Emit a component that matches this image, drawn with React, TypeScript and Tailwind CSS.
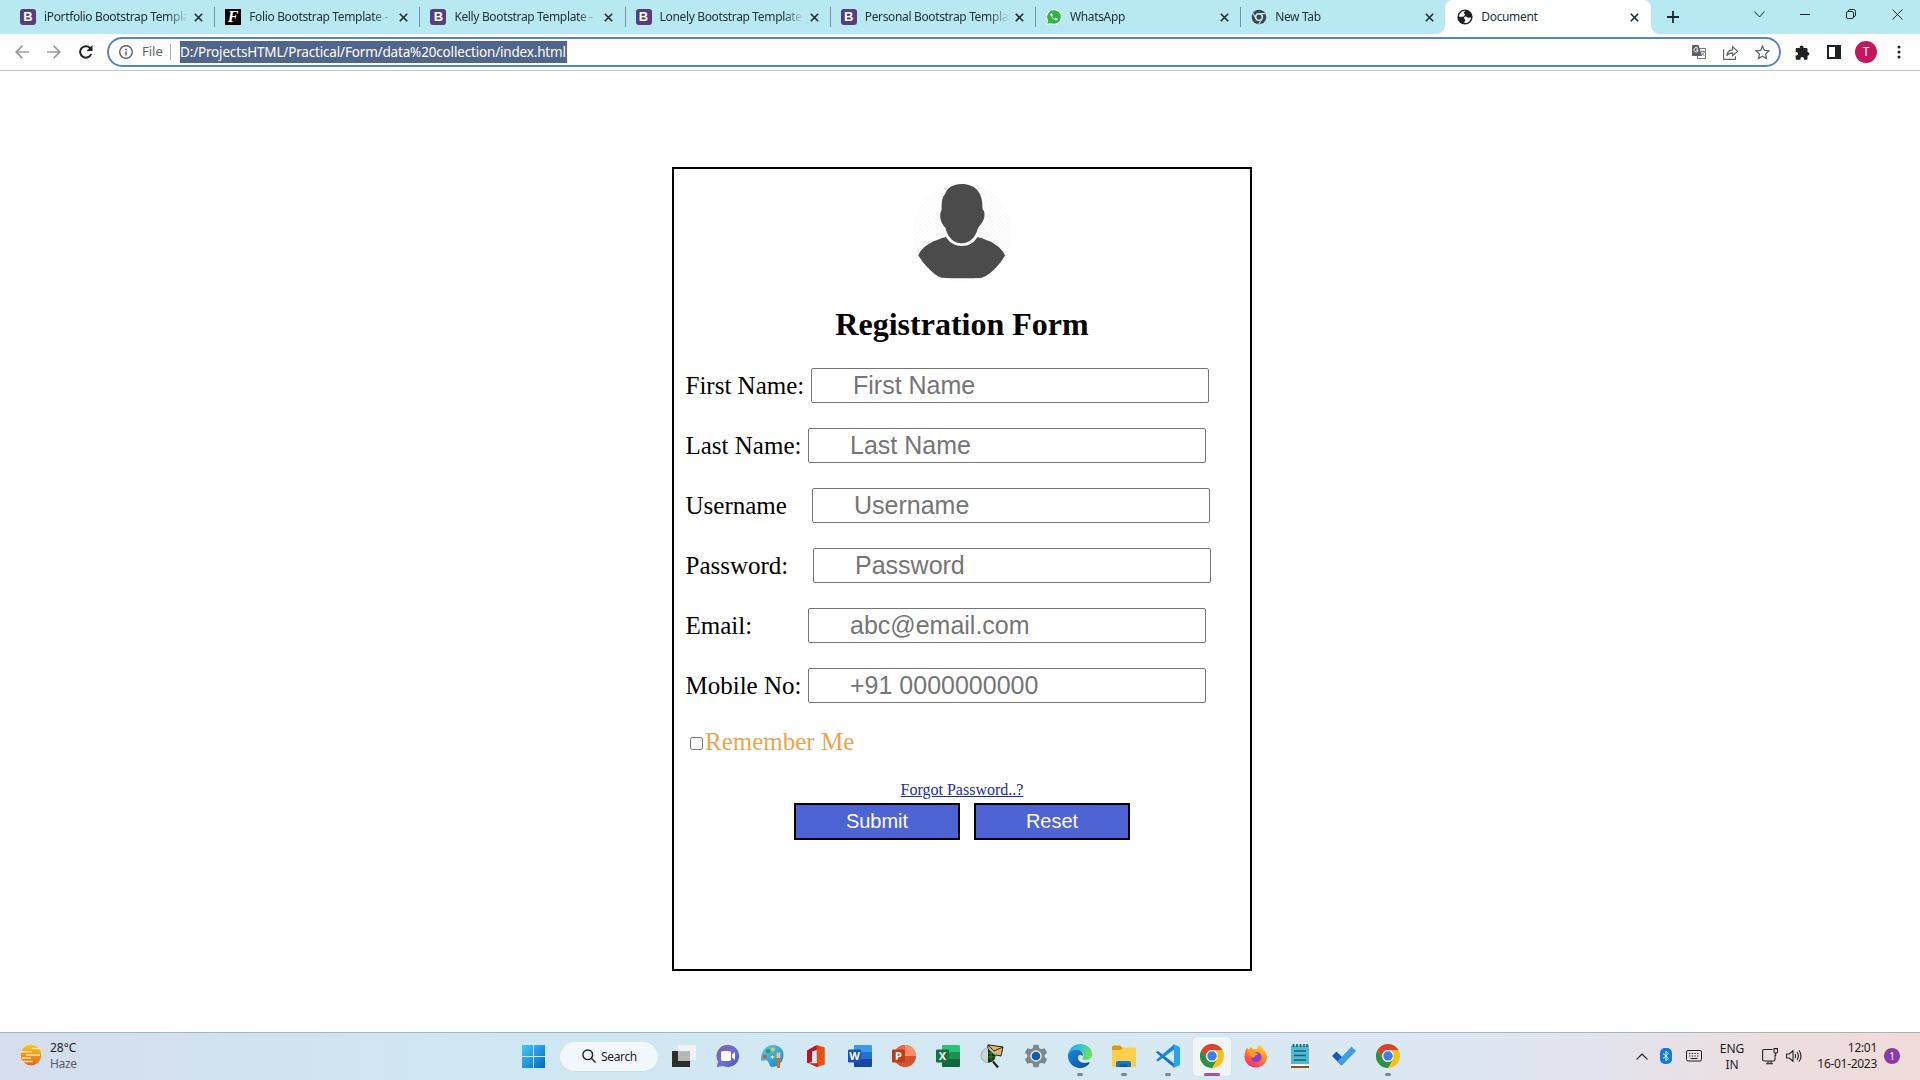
import React from "react";

const UI = "font-['Noto_Sans',sans-serif]";

/* ---------- Tab favicons ---------- */
function BootstrapIcon() {
  return (
    <div className="flex size-4 items-center justify-center rounded-[3px] bg-[#563d7c] font-['Liberation_Sans',sans-serif] text-[13px] leading-4 font-bold text-white">
      B
    </div>
  );
}
function FolioIcon() {
  return (
    <div className="flex size-4 items-center justify-center bg-black font-['Liberation_Serif',serif] text-[16px] leading-4 font-bold text-white italic">
      F
    </div>
  );
}
function WhatsAppIcon() {
  return (
    <svg className="size-4" viewBox="0 0 16 16">
      <path d="M0 16l1.2-4.1A8 8 0 1 1 4.3 15z" fill="#f4fbf7" />
      <path d="M1.3 14.7l.9-3.2A6.8 6.8 0 1 1 4.700 13.900z" fill="#2cb742" />
      <path d="M5.300 4c-.8.5-1.100 1.500-.6 2.700.9 2.200 2.700 3.800 4.800 4.500 1.100.3 2-.2 2.200-1.200.1-.4-1.700-1.300-2-1.200-.4.1-.7 1-1.100.9-1.100-.4-2-1.200-2.500-2.300-.1-.3.700-.8.6-1.200C6.600 5.800 6 4 5.300 4z" fill="#fff" />
    </svg>
  );
}
function GreyChromeIcon() {
  return (
    <svg className="size-4" viewBox="0 0 16 16" fill="none">
      <circle cx="8" cy="8" r="7.300" fill="#3b4a50" />
      <circle cx="8" cy="8" r="3.300" stroke="#d3f0f5" strokeWidth="1.500" />
      <path d="M8 4.700h6.600M5.100 9.700L1.800 4.300M10.900 9.700L7.800 15.200" stroke="#c4ebf3" strokeWidth="1.200" />
    </svg>
  );
}
function GlobeIcon() {
  return (
    <svg className="size-4" viewBox="0 0 16 16">
      <circle cx="8" cy="8" r="7.600" fill="#202124" />
      <path d="M8.500 1.800c-.3 1-1.700 1-1.900 2-.1.900 1.300.8 1.400 1.700.1 1-1.500 1.200-1.500 2.300H2C2 4.500 5 1.500 8.500 1.800zM8.500 7.600c1.200-.2 1.500 1 2.700 1.100 1 .1 1.700-.5 2.900-.2-.2 2.700-2.300 5.200-5.200 5.600-1.300.1-1.700-.3-1.500-1.300.2-.8 1-.8.900-1.700C8.200 10 6.900 10 7 8.800c.1-.7.700-1.100 1.500-1.200z" fill="#fff" />
    </svg>
  );
}
function Cross() {
  return (
    <svg className="size-[9px] shrink-0" viewBox="0 0 9 9" stroke="#1f2d33" strokeWidth="1.600">
      <path d="M.8.800l7.400 7.400M8.200.800L.8 8.200" />
    </svg>
  );
}

const tabs = [
  { title: "iPortfolio Bootstrap Templa", icon: <BootstrapIcon /> },
  { title: "Folio Bootstrap Template -", icon: <FolioIcon /> },
  { title: "Kelly Bootstrap Template -", icon: <BootstrapIcon /> },
  { title: "Lonely Bootstrap Template", icon: <BootstrapIcon /> },
  { title: "Personal Bootstrap Templa", icon: <BootstrapIcon /> },
  { title: "WhatsApp", icon: <WhatsAppIcon /> },
  { title: "New Tab", icon: <GreyChromeIcon /> },
];

function TabStrip() {
  return (
    <div className="flex h-[34px] bg-[#b8e8f1] pl-2.5 text-[12px] text-[#20343b]">
      {tabs.map((t, i) => (
        <div key={t.title} className="flex w-[205.200px] shrink-0 items-center pl-2.5">
          <div className="shrink-0">{t.icon}</div>
          <div className="ml-2 w-[144px] shrink-0 [mask-image:linear-gradient(to_right,#000_86%,transparent_100%)] tracking-[-0.35px] whitespace-nowrap">
            {t.title}
          </div>
          <div className="ml-[6px] flex grow items-center">
            <Cross />
          </div>
          {i < 6 && <div className="h-5 w-px bg-[#70969f]" />}
        </div>
      ))}
      <div className="relative -ml-px flex w-[206px] shrink-0 items-center rounded-t-lg bg-white pl-3">
        <div className="absolute bottom-0 -left-2 size-2 bg-[radial-gradient(circle_at_0_0,transparent_7.500px,#fff_8px)]" />
        <div className="absolute -right-2 bottom-0 size-2 bg-[radial-gradient(circle_at_100%_0,transparent_7.500px,#fff_8px)]" />
        <GlobeIcon />
        <span className="ml-2 w-[149px] tracking-[-0.35px]">Document</span>
        <Cross />
      </div>
      <svg className="mt-[11px] ml-[16px] size-3" viewBox="0 0 12 12" stroke="#1b2a30" strokeWidth="1.800">
        <path d="M6 0v12M0 6h12" />
      </svg>
      <div className="mr-[17px] ml-auto flex items-center gap-[36px] pb-[6px]">
        <svg className="mr-[-1px] h-[7px] w-[11px]" viewBox="0 0 11 7" fill="none" stroke="#1b2a30">
          <path d="M.5.500l5 5.500 5-5.500" />
        </svg>
        <svg className="h-2.5 w-[10px]" viewBox="0 0 10 10" stroke="#1b2a30">
          <path d="M0 5.500h10" />
        </svg>
        <svg className="size-[10px]" viewBox="0 0 10 10" fill="none" stroke="#1b2a30">
          <rect x=".5" y="2.500" width="7" height="7" rx="1.500" />
          <path d="M2.500 2.500v-.5Q2.500.500 4 .5h3.500q2 0 2 2V6q0 1.500-1.500 1.500" />
        </svg>
        <svg className="size-[11px]" viewBox="0 0 11 11" stroke="#1b2a30">
          <path d="M.5.500l10 10M10.500.500l-10 10" />
        </svg>
      </div>
    </div>
  );
}

function Toolbar() {
  return (
    <div className="flex h-[37px] items-center border-b border-[#c9c9c9] bg-white">
      <svg className="ml-[15px] h-[14px] w-[14px]" viewBox="0 0 14 14" fill="none" stroke="#9a9a9a" strokeWidth="1.700">
        <path d="M14 7H1.300M7.300.800L1.200 7l6.100 6.200" />
      </svg>
      <svg className="ml-[18px] h-[14px] w-[14px]" viewBox="0 0 14 14" fill="none" stroke="#9a9a9a" strokeWidth="1.700">
        <path d="M0 7h12.700M6.700.800L12.800 7l-6.100 6.200" />
      </svg>
      <svg className="ml-[18px] h-[14px] w-[14px]" viewBox="0 0 14 14" fill="none" stroke="#202124" strokeWidth="2">
        <path d="M12.200 9A5.700 5.700 0 1 1 11 3l1.500 1.500" />
        <path d="M13.500 0v6H7.500z" fill="#202124" stroke="none" />
      </svg>
      <div className="ml-[14px] flex h-[30px] w-[1674px] items-center rounded-full border-2 border-[#5484d0] text-[13px]">
        <svg className="ml-[10px] size-[14px]" viewBox="0 0 14 14" fill="none" stroke="#5f6368" strokeWidth="1.400">
          <circle cx="7" cy="7" r="6.300" />
          <path d="M7 6.200v4.300M7 3.400v1.500" />
        </svg>
        <span className="ml-[9px] w-[22px] text-[#5f6368]">File</span>
        <div className="ml-[6px] h-4 w-px bg-[#a8a8a8]" />
        <span className="ml-[9px] h-[22px] w-[387px] bg-[#51658a] text-[13.500px] leading-[22px] tracking-[-0.17px] whitespace-nowrap text-white">
          D:/ProjectsHTML/Practical/Form/data%20collection/index.html
        </span>
        <div className="mr-[9px] ml-auto flex items-center gap-[17px] text-[#5f6368]">
          <svg className="size-[14px]" viewBox="0 0 14 14" fill="none">
            <rect x="5.500" y="3.500" width="8" height="10" stroke="#777b80" />
            <path d="M0 0h6.500l3.500 11H0z" fill="#5f6368" />
            <path d="M6 4H4.300M5.900 3.400A2.200 2.200 0 1 0 6.200 5.600H4.300" stroke="#fff" strokeWidth=".9" />
            <path d="M8.500 6.500h4.500M11 5.500v1M12.300 6.500c-.4 2-1.500 3-3 4M9 7.500l3.500 3.500" stroke="#5f6368" strokeWidth=".8" />
          </svg>
          <svg className="size-[15px]" viewBox="0 0 14 14" fill="none" stroke="#5f6368" strokeWidth="1.100">
            <path d="M.6 4v9.400h11V10.500M3.500 10c.3-3.500 2.200-5.300 5.500-5.500V1.500l4.500 4.400L9 10V7.300C6.500 7.300 4.700 8 3.500 10z" />
          </svg>
          <svg className="size-[15px]" viewBox="0 0 15 15" fill="none" stroke="#5f6368" strokeWidth="1.300">
            <path d="M7.500 1.200l1.900 4.200 4.600.5-3.400 3.100.9 4.600-4-2.300-4 2.300.9-4.600L1 5.900l4.600-.5z" />
          </svg>
        </div>
      </div>
      <svg className="ml-[14px] size-[15px]" viewBox="0 0 15 15" fill="#202124">
        <path d="M4.700 2.300a1.900 1.900 0 0 1 3.800 0V3h3q1 0 1 1v3h.4a1.900 1.900 0 0 1 0 3.700h-.4v3q0 1-1 1H9v-.8a1.800 1.800 0 0 0-3.600 0v.8H1.700q-1 0-1-1v-3.200h.6a1.800 1.800 0 0 0 0-3.600H.7V4q0-1 1-1h3z" />
      </svg>
      <div className="ml-[17px] h-[14px] w-[14px] border-2 border-r-[6px] border-[#202124]" />
      <div className="ml-[14px] flex size-[22px] items-center justify-center rounded-full bg-[#c2185b] text-[12px] text-white">T</div>
      <svg className="ml-[20px] h-[14px] w-1" viewBox="0 0 4 14" fill="#202124">
        <circle cx="2" cy="2" r="1.500" />
        <circle cx="2" cy="7" r="1.500" />
        <circle cx="2" cy="12" r="1.500" />
      </svg>
    </div>
  );
}

/* ---------- Registration form ---------- */
const fields = [
  { label: "First Name:", hint: "First Name", width: "w-[125.500px]" },
  { label: "Last Name:", hint: "Last Name", width: "w-[122.500px]" },
  { label: "Username", hint: "Username", width: "w-[126.500px]" },
  { label: "Password:", hint: "Password", width: "w-[127.500px]" },
  { label: "Email:", hint: "abc@email.com", width: "w-[122.500px]" },
  { label: "Mobile No:", hint: "+91 0000000000", width: "w-[122.500px]" },
];

function Avatar() {
  return (
    <svg className="mx-auto h-[100px] w-[100px]" viewBox="0 0 100 100">
      <defs>
        <pattern id="hatch" width="3" height="3" patternUnits="userSpaceOnUse" patternTransform="rotate(45)">
          <rect width="3" height="3" fill="#fefefe" />
          <rect width="1" height="3" fill="#f8f8f8" />
        </pattern>
      </defs>
      <circle cx="50" cy="50" r="49.500" fill="url(#hatch)" />
      <path
        d="M34 55C22 58.500 10.500 63 6.300 73.500C13 84 22 92.500 28 95.300Q30 96.200 50 96.300T71 95.300C78 92.500 87 84 93 73.500C88.500 63 77.500 58.500 65.500 55c-3.500 6-9 9-15.500 9s-12.500-3-16-9z"
        fill="#4b4b4b"
      />
      <path
        d="M49.500 61.300c8 0 14-5.500 16.500-15.300 3.500-4.500 6.500-8 6.500-13 0-3-.5-4.500-2-6C71 11 64 2 49.500 2c-8 0-14.500 3.500-16.300 10-3.200 3.500-3.700 8-3.500 15.500-3 5.500-1.500 13 3.800 18.500C36 55.500 41.500 61.300 49.500 61.300z"
        fill="#4b4b4b"
      />
    </svg>
  );
}

function RegistrationForm() {
  return (
    <div className="mx-auto mt-24 h-[804px] w-[580px] border-2 border-black bg-white px-[11px] pt-[13px] font-['Liberation_Serif',serif] text-black">
      <Avatar />
      <h2 className="mt-[24px] text-center text-[32px] leading-[37px] font-bold">Registration Form</h2>
      <div className="mt-[25px] flex flex-col gap-[25px] pl-[0.500px]">
        {fields.map((f) => (
          <div key={f.label} className="flex h-[35px] items-center">
            <label className={`shrink-0 text-[25px] leading-[35px] ${f.width}`}>{f.label}</label>
            <input
              className="h-[35px] w-[398px] rounded-[2px] border border-[#767676] bg-white py-0 pr-0 pl-[41px] font-['Liberation_Sans',sans-serif] text-[25px] leading-[33px] placeholder:text-[#757575]"
              placeholder={f.hint}
            />
          </div>
        ))}
      </div>
      <div className="mt-[24px] flex h-[29px] items-center text-[25px] text-[#eea34d]">
        <div className="mt-[3px] mr-[2px] ml-[5px] size-[13px] rounded-[2.500px] border border-[#767676]" />
        Remember Me
      </div>
      <div className="mt-[25px] text-center text-[16px] leading-[18px] text-[#1a2f9e] underline">Forgot Password..?</div>
      <div className="mt-1 flex justify-center gap-[14px] font-['Liberation_Sans',sans-serif] text-[20px] text-white">
        <button className="h-[37px] w-[166px] border-2 border-black bg-[#4e64d4] leading-[33px]">Submit</button>
        <button className="h-[37px] w-[156px] border-2 border-black bg-[#4e64d4] leading-[33px]">Reset</button>
      </div>
    </div>
  );
}

/* ---------- Taskbar icons ---------- */
function WindowsLogo() {
  return (
    <svg className="size-[23px]" viewBox="0 0 23 23">
      <defs>
        <linearGradient id="win" x1="0" y1="0" x2="1" y2="1">
          <stop offset="0" stopColor="#45c8fa" />
          <stop offset="1" stopColor="#0268c8" />
        </linearGradient>
      </defs>
      <path d="M0 0h11v11H0zM12 0h11v11H12zM0 12h11v11H0zM12 12h11v11H12z" fill="url(#win)" />
    </svg>
  );
}
function TaskView() {
  return (
    <svg className="size-6" viewBox="0 0 24 24">
      <path d="M6 1h18v15H6z" fill="#f0f2f4" />
      <path d="M0 7h18v16H0z" fill="#2e2e2e" />
      <path d="M6 7h12v10H6z" fill="#b5b7b8" />
    </svg>
  );
}
function TeamsChat() {
  return (
    <svg className="size-6" viewBox="0 0 24 24">
      <defs>
        <linearGradient id="chat" x1="0" y1="0" x2="1" y2="1">
          <stop offset="0" stopColor="#7f5fa8" />
          <stop offset=".5" stopColor="#6f70d0" />
          <stop offset="1" stopColor="#5550bd" />
        </linearGradient>
      </defs>
      <path d="M12 1a11 11 0 1 1-4.500 21L.8 23l1.200-5.500A11 11 0 0 1 12 1z" fill="url(#chat)" />
      <rect x="5" y="7" width="10" height="10" rx="2" fill="#fff" />
      <path d="M16 10.500L19 8v8l-3-2.500z" fill="#fff" />
    </svg>
  );
}
function Paint() {
  return (
    <svg className="size-6" viewBox="0 0 24 24">
      <defs>
        <linearGradient id="palette" x1="0" y1="0" x2="1" y2="1">
          <stop offset="0" stopColor="#5bd0ee" />
          <stop offset="1" stopColor="#1580cf" />
        </linearGradient>
      </defs>
      <path d="M13 1c6 0 10.500 4 10.500 9.500C23.500 18 18 23 12 23c-3 0-2.500-5-5-6.500S1 19 1 15C1 7 6 1 13 1z" fill="url(#palette)" />
      <circle cx="8" cy="7" r="2.200" fill="#3a9b45" />
      <circle cx="13" cy="5.500" r="2" fill="#f7c32e" />
      <circle cx="4.800" cy="12.500" r="2" fill="#d65532" />
      <path d="M12.500 11v4M10.500 13h4" stroke="#fff" />
      <path d="M16.500 14h4l-.5 10h-3z" fill="#b57a3a" />
      <path d="M16.500 8.500h4V14h-4z" fill="#e3c58d" />
    </svg>
  );
}
function Office() {
  return (
    <svg className="size-6" viewBox="0 0 24 24">
      <path d="M3 6.500L12.500 1 14 5.500 8 7.500v10L4 19.500l-1-1z" fill="#b0182c" />
      <path d="M12.500 1l8 2.500v17L13 23z" fill="#e24a12" />
      <path d="M12.500 1L15 5v17l-2.500 1-8-3.700H14V5z" fill="#c9251c" />
      <path d="M14 5l6.500-1.500v17L14 22z" fill="#e8500f" />
    </svg>
  );
}
type TileProps = { letter: string; top: string; mid: string; low: string; badge: string; round?: boolean };
function OfficeTile({ letter, top, mid, low, badge, round }: TileProps) {
  return (
    <div className="relative size-6">
      <svg className="absolute inset-0 size-6" viewBox="0 0 24 24">
        {round ? (
          <>
            <circle cx="13" cy="12" r="11" fill={low} />
            <path d="M2 12A11 11 0 0 1 13 1v11z" fill={mid} />
            <path d="M13 1a11 11 0 0 1 11 11H13z" fill={top} />
          </>
        ) : (
          <>
            <path d="M6 2q0-1 1-1h16q1 0 1 1v6H6z" fill={top} />
            <path d="M6 8h18v7H6z" fill={mid} />
            <path d="M6 15h18v7q0 1-1 1H7q-1 0-1-1z" fill={low} />
          </>
        )}
        <rect x="0" y="5.500" width="13" height="13" rx="1.200" fill={badge} />
      </svg>
      <span className="absolute top-[5px] left-0 w-[13px] text-center text-[11px] leading-[14px] font-bold text-white">{letter}</span>
    </div>
  );
}
function MailSearch() {
  return (
    <svg className="size-6" viewBox="0 0 24 24">
      <path d="M8 .800l15 2.200-2 9-5-1-5 4-4-6z" fill="#e2b660" stroke="#222" />
      <path d="M8 1l6 6 9-4" fill="none" stroke="#222" />
      <circle cx="8" cy="11.500" r="7" fill="#cbd5d4" stroke="#a8a8a0" strokeWidth="1" />
      <path d="M8 4.500v14c5 0 7.500-3 7.500-7z" fill="#10340f" />
      <path d="M8 9h5M8 13h7M11 7v10" stroke="#2fa22f" strokeWidth=".8" />
      <path d="M13 17.500l5 6" stroke="#222" strokeWidth="2.200" />
    </svg>
  );
}
function Gear() {
  return (
    <svg className="size-6" viewBox="0 0 24 24">
      <path d="M9.500.800h5l.8 3.400 2 1.100 3.300-1 2.500 4.300-2.400 2.400v2l2.400 2.400-2.500 4.300-3.300-1-2 1.100-.8 3.400h-5l-.8-3.400-2-1.100-3.300 1L.9 15.400 3.300 13v-2L.9 8.600l2.500-4.300 3.300 1 2-1.100z" fill="#7d858d" />
      <circle cx="12" cy="12" r="5.800" fill="#e4ebf0" />
      <circle cx="12" cy="12" r="4.300" fill="#0f5cab" />
    </svg>
  );
}
function Edge() {
  return (
    <svg className="size-6" viewBox="0 0 24 24">
      <defs>
        <linearGradient id="edgeTop" x1="0" y1="0" x2="1" y2=".3">
          <stop offset="0" stopColor="#2ba6e4" />
          <stop offset=".5" stopColor="#35c1d6" />
          <stop offset="1" stopColor="#6be060" />
        </linearGradient>
        <linearGradient id="edgeLow" x1="0" y1="0" x2="1" y2="1">
          <stop offset="0" stopColor="#1b87d4" />
          <stop offset="1" stopColor="#0e4d9b" />
        </linearGradient>
      </defs>
      <path d="M0 12C0 8 4 5 9.500 5.500 13 6 15.500 9 15 12c-2-2-4.500-1.500-5 1-.5 4 4 7 9.500 5.500 1.500-.4 2.500-.2 2 .7C19.500 22 16 24 12 24 5.500 24 0 18.500 0 12z" fill="url(#edgeLow)" />
      <path d="M.2 10.500C1 4.500 6 0 12 0c7 0 12 4.500 12 10 0 4-3 6-6.500 6-2.500 0-3.500-1-3-2 2.500-3 .5-7.500-4.500-8.200C5.500 5.300 2 7.500.2 10.500z" fill="url(#edgeTop)" />
    </svg>
  );
}
function Folder() {
  return (
    <svg className="size-6" viewBox="0 0 24 24">
      <path d="M0 3q0-1.500 1.500-1.500H8L11 4h12v6H0z" fill="#d79b14" />
      <path d="M0 6h9l2-2.500h11.500Q24 3.500 24 5v17q0 1-1 1H1q-1 0-1-1z" fill="#fbcf4b" />
      <path d="M4 23v-4q0-2 2-2h11q2 0 2 2v4z" fill="#1675c4" />
      <path d="M7.500 20.500h8v2.500h-8z" fill="#0e5a9c" />
    </svg>
  );
}
function VsCode() {
  return (
    <svg className="size-6" viewBox="0 0 24 24">
      <path d="M0 8.500L2 7l16 12.500V23.500z" fill="#1174c0" />
      <path d="M0 16l2 1.500L18 5.500V.5z" fill="#1787d8" />
      <path d="M17 0l6 2.500q1 .5 1 1.500v16q0 1-1 1.500L17 24l1-4V4z" fill="#2ba3ee" />
    </svg>
  );
}
function Chrome() {
  return (
    <svg className="size-6" viewBox="0 0 24 24">
      <circle cx="12" cy="12" r="12" fill="#fbc116" />
      <path d="M1.600 6A12 12 0 0 1 22.400 6H12a6 6 0 0 0-5.200 9z" fill="#dc4132" />
      <path d="M1.600 6A12 12 0 0 0 12 24l5.200-9a6 6 0 0 1-10.400 0z" fill="#27934a" />
      <circle cx="12" cy="12" r="6" fill="#fff" />
      <circle cx="12" cy="12" r="4.700" fill="#3b7ded" />
    </svg>
  );
}
function Firefox() {
  return (
    <svg className="size-6" viewBox="0 0 24 24">
      <defs>
        <linearGradient id="fox" x1=".8" y1="0" x2=".3" y2="1">
          <stop offset="0" stopColor="#ffe23c" />
          <stop offset=".45" stopColor="#ff8b22" />
          <stop offset="1" stopColor="#f5277a" />
        </linearGradient>
      </defs>
      <path d="M3 3.500l2 2.500 2-3.500 2 3c1.500-.5 3-.3 4 0C13 3 14.500 1 16 .5c.5 3 6.500 5.500 7 11.500.5 6.500-5 11.500-11 11.500S.5 19 .5 12.500C.5 9 1.500 6 3 3.500z" fill="url(#fox)" />
      <path d="M11.500 8c4 0 6.500 2.500 6 5.500S14.500 18 12 18c-3 0-5-2-5-4.500 1.500 1 3 .5 3.500-.5L7 9.500z" fill="#8a3fd0" />
      <path d="M5 7c3-1 5 0 6.500 1.500L14 10c-1 1.500-3 .5-3.500 3C8 14 5 12 5 7z" fill="#ff9a1f" />
    </svg>
  );
}
function Notepad() {
  return (
    <svg className="size-6" viewBox="0 0 24 24">
      <path d="M3 20h18v2.500H3z" fill="#fff" />
      <path d="M3 22h18v2H3z" fill="#8e5320" />
      <path d="M3 1.500h18V20H3z" fill="#4fbbd3" />
      <path d="M5.500 0v3M9 0v3M12.500 0v3M16 0v3M19 0v3" stroke="#1e4f66" strokeWidth="1.500" />
      <path d="M6 7h12M6 11.500h12M6 16h12" stroke="#14607a" strokeWidth="1.500" />
    </svg>
  );
}
function Todo() {
  return (
    <svg className="size-6" viewBox="0 0 24 24">
      <path d="M0 12L4.500 7.500l9.500 9.500L9.500 21.500z" fill="#1b57b8" />
      <path d="M5.500 17.500L19.500 2.500 24 7 9.500 21.500z" fill="#3f9de8" />
    </svg>
  );
}

const apps: { icon: React.ReactNode; state?: "running" | "active" }[] = [
  { icon: <TaskView /> },
  { icon: <TeamsChat /> },
  { icon: <Paint /> },
  { icon: <Office /> },
  { icon: <OfficeTile letter="W" top="#3d9bea" mid="#2470d4" low="#1546a5" badge="#1a52b5" /> },
  { icon: <OfficeTile letter="P" top="#ff8f6b" mid="#e9694a" low="#d35230" badge="#c13b1b" round /> },
  { icon: <OfficeTile letter="X" top="#2fbf78" mid="#1b9155" low="#12683a" badge="#107540" /> },
  { icon: <MailSearch /> },
  { icon: <Gear /> },
  { icon: <Edge />, state: "running" },
  { icon: <Folder />, state: "running" },
  { icon: <VsCode />, state: "running" },
  { icon: <Chrome />, state: "active" },
  { icon: <Firefox /> },
  { icon: <Notepad /> },
  { icon: <Todo /> },
  { icon: <Chrome />, state: "running" },
];

function HazeSun() {
  return (
    <svg className="h-[22px] w-6" viewBox="0 0 24 22">
      <defs>
        <linearGradient id="sun" x1="0" y1="0" x2="0" y2="1">
          <stop offset="0" stopColor="#fbc717" />
          <stop offset="1" stopColor="#e0661b" />
        </linearGradient>
      </defs>
      <circle cx="12" cy="11" r="10.300" fill="url(#sun)" />
      <path d="M13 4.500h11M2 7.800h11M7 11h14M3 14h9M0 17.500h14" stroke="#f9e3a8" strokeWidth="1.500" />
    </svg>
  );
}

function Tray() {
  return (
    <div className="ml-auto flex h-full shrink-0 items-center text-[12px] leading-4 text-[#1d1d1f]">
      <svg className="h-[7px] w-3" viewBox="0 0 12 7" fill="none" stroke="#222" strokeWidth="1.200">
        <path d="M.5 6.500L6 1l5.500 5.500" />
      </svg>
      <div className="-mt-px ml-3 flex h-4 w-3 items-center justify-center rounded-[5px] bg-[#0a7cdf]">
        <svg className="h-3 w-2" viewBox="0 0 8 12" fill="none" stroke="#fff">
          <path d="M1 3.500l5.500 5L4 11V1l2.500 2.500-5.500 5" />
        </svg>
      </div>
      <svg className="-mt-px ml-[14px] h-3 w-4" viewBox="0 0 16 12" fill="none" stroke="#222">
        <rect x=".5" y=".5" width="15" height="10.500" rx="1.500" />
        <path d="M3 3.500h10M3 6h10" strokeDasharray="1.300 1.400" />
        <path d="M4.500 8.500h7" />
      </svg>
      <div className="ml-4 w-7 text-center">
        <div>ENG</div>
        <div>IN</div>
      </div>
      <svg className="-mt-px ml-4 h-[17px] w-4" viewBox="0 0 16 17" fill="none" stroke="#222" strokeWidth="1.100">
        <path d="M10.500 1.500H2Q.6 1.500.6 3v8.500Q.6 13 2 13h9.500q1.500 0 1.500-1.500V7M4 15.700h7M6 13v2.700M9 13v2.700" />
        <path d="M12 .6h3.500V4q0 1-1 1H13q-1 0-1-1zM13.700 5v3" />
      </svg>
      <svg className="-mt-px ml-2 h-[14px] w-4" viewBox="0 0 16 14" fill="none" stroke="#222" strokeWidth="1.100">
        <path d="M.6 5v4h2.700L7 12.200V1.800L3.300 5zM9 5q1.300 2 0 4M11 3q2.800 4 0 8M13 1.200q4 5.800 0 11.600" />
      </svg>
      <div className="-mt-px ml-3 w-[63px] text-right tracking-[-0.3px] whitespace-nowrap">
        <div>12:01</div>
        <div className="flex justify-end">16-01-2023</div>
      </div>
      <div className="-mt-px mr-5 ml-[7px] flex size-4 items-center justify-center rounded-full bg-[#8a3aa6] text-[10px] text-white">1</div>
    </div>
  );
}

function Taskbar() {
  return (
    <div className="flex h-12 items-center border-t border-[#a5b6bd] bg-[linear-gradient(to_right,#d4ddec_0%,#d2e2f1_12%,#cfe7f2_26%,#d5e9f3_55%,#dbe8f2_72%,#e1e4ef_82%,#eddede_93%,#f0dbda_100%)]">
      <div className="flex w-[522px] shrink-0 items-center pl-[19px]">
        <div className="-mt-1">
          <HazeSun />
        </div>
        <div className="-mt-px ml-[7px] text-[12px] leading-4 text-[#1d1d1f]">
          <div>28°C</div>
          <div className="tracking-[-0.300px] text-[#56606b]">Haze</div>
        </div>
      </div>
      <WindowsLogo />
      <div className="ml-[15px] flex h-[30px] w-[98px] items-center rounded-full border-b border-[#ccd9e0] bg-[#f1f7fb] pl-[22px] text-[12px] text-[#1d1d1f]">
        <svg className="size-[14px]" viewBox="0 0 15 15" fill="none" stroke="#222" strokeWidth="1.500">
          <circle cx="6.200" cy="6.200" r="5.200" />
          <path d="M10 10l4.500 4.500" />
        </svg>
        <span className="mt-[2px] ml-[5px] tracking-[-0.35px]">Search</span>
      </div>
      <div className="ml-1 flex">
        {apps.map((a, i) => (
          <div key={i} className="flex w-11 items-center justify-center">
            <div
              className={
                a.state === "active"
                  ? "relative flex h-[39px] w-[38px] items-center justify-center rounded bg-[#f0f5fa] pb-px shadow-[0_0_1px_#b5c3cc]"
                  : "relative flex h-[39px] w-[38px] items-center justify-center pb-px"
              }
            >
              {a.icon}
              {a.state === "running" && <div className="absolute bottom-0 h-[3px] w-1.5 rounded-full bg-[#7c878e]" />}
              {a.state === "active" && <div className="absolute bottom-0 h-[3px] w-4 rounded-full bg-[#a24fb8]" />}
            </div>
          </div>
        ))}
      </div>
      <Tray />
    </div>
  );
}

export default function App() {
  return (
    <div className={`flex h-[1080px] w-[1920px] flex-col overflow-hidden bg-white ${UI}`}>
      <TabStrip />
      <Toolbar />
      <main className="grow pl-1">
        <RegistrationForm />
      </main>
      <Taskbar />
    </div>
  );
}
